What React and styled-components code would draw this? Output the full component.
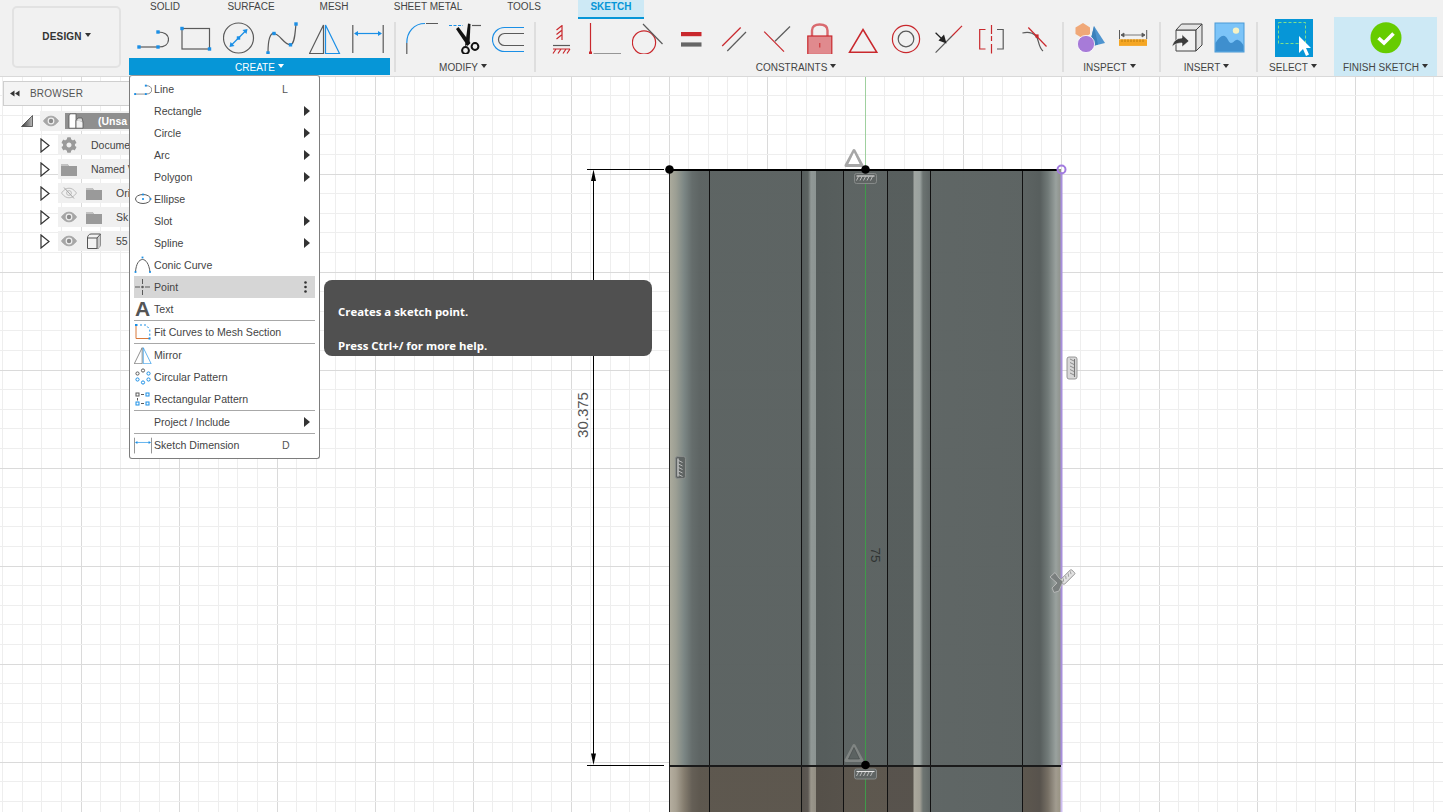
import React from "react";
import styled, { createGlobalStyle } from "styled-components";
import { FaCog } from "react-icons/fa";

const BLUE = "#1b8fe6";
const GRAY = "#5a5a5a";
const RED = "#c9282d";

const GlobalStyle = createGlobalStyle`
  html, body {
    margin: 0;
    padding: 0;
    background: #fff;
  }
  body {
    font-family: "Liberation Sans", Arial, sans-serif;
  }
`;

const Page = styled.div`
  width: 1443px;
  height: 812px;
  display: flex;
  flex-direction: column;
  overflow: hidden;
`;

const Toolbar = styled.header`
  height: 76px;
  flex: none;
  display: flex;
  background: #f1f1f1;
  border-bottom: 1px solid #d9d9d9;
`;

const DesignColumn = styled.div`
  width: 129px;
  flex: none;
  box-sizing: border-box;
  padding: 6px 8px 8px 12px;
`;

const DesignButton = styled.div`
  height: 100%;
  box-sizing: border-box;
  display: flex;
  align-items: center;
  justify-content: center;
  padding-bottom: 2px;
  border: 2px solid #e2e2e2;
  border-radius: 5px;
  font-size: 10px;
  font-weight: bold;
  color: #333;
  letter-spacing: 0.2px;
`;

const Caret = styled.span`
  display: inline-block;
  width: 0;
  height: 0;
  margin-left: 3px;
  margin-bottom: 2px;
  border-left: 3px solid transparent;
  border-right: 3px solid transparent;
  border-top: 4px solid ${(p) => p.$color || "#333"};
`;

const RightColumn = styled.div`
  flex: 1;
  display: flex;
  flex-direction: column;
`;

const Tabs = styled.nav`
  height: 17px;
  display: flex;
  align-items: flex-start;
`;

const Tab = styled.div`
  width: ${(p) => p.$width}px;
  height: ${(p) => (p.$active ? 19 : 13)}px;
  flex: none;
  box-sizing: border-box;
  margin-left: ${(p) => p.$offset || 0}px;
  text-align: center;
  font-size: 10px;
  line-height: 13px;
  font-weight: ${(p) => (p.$active ? "bold" : "normal")};
  color: ${(p) => (p.$active ? "#0696d7" : "#444")};
  background: ${(p) => (p.$active ? "#cde9f5" : "transparent")};
  border-bottom: ${(p) => (p.$active ? "2px solid #0696d7" : "none")};
  position: relative;
  z-index: 1;
`;

const Panels = styled.div`
  height: 59px;
  display: flex;
`;

const Panel = styled.section`
  width: ${(p) => p.$width}px;
  flex: none;
  display: flex;
  flex-direction: column;
  box-sizing: border-box;
  padding-top: 5px;
  margin-right: ${(p) => p.$after || 0}px;
  background: ${(p) => (p.$finish ? "#cde9f5" : "transparent")};
  position: relative;
`;

const Separator = styled.div`
  width: 2px;
  height: 50px;
  flex: none;
  margin-top: 5px;
  background: #dedede;
`;

const ToolRow = styled.div`
  height: 36px;
  display: flex;
  gap: 11px;
  padding-left: ${(p) => p.$pad}px;
  justify-content: ${(p) => (p.$center ? "center" : "flex-start")};
  svg {
    flex: none;
    display: block;
  }
`;

const PanelLabel = styled.div`
  height: 17px;
  box-sizing: border-box;
  padding-top: 1px;
  padding-right: ${(p) => p.$trim || 0}px;
  display: flex;
  align-items: center;
  justify-content: center;
  font-size: 10px;
  color: ${(p) => (p.$active ? "#fff" : "#444")};
  background: ${(p) => (p.$active ? "#0696d7" : "transparent")};
`;

const Viewport = styled.main`
  flex: 1;
  position: relative;
  background: #fff;
`;

const Scene = styled.svg`
  position: absolute;
  inset: 0;
  width: 100%;
  height: 100%;
  display: block;
`;

const DimensionText = styled.span`
  position: absolute;
  left: ${(p) => p.$x}px;
  top: ${(p) => p.$y}px;
  font-size: ${(p) => p.$size}px;
  line-height: 1;
  color: ${(p) => p.$color};
  white-space: nowrap;
  transform: translate(-50%, -50%) rotate(${(p) => p.$turn}deg);
`;

const Browser = styled.aside`
  position: absolute;
  left: 3px;
  top: 4px;
  width: 127px;
`;

const BrowserHeader = styled.div`
  height: 25px;
  box-sizing: border-box;
  display: flex;
  align-items: center;
  gap: 10px;
  padding-left: 6px;
  background: #f4f4f4;
  border: 1px solid #cfcfcf;
  font-size: 10px;
  color: #555;
  letter-spacing: 0.2px;
`;

const Tree = styled.div`
  padding-top: 3px;
`;

const TreeRow = styled.div`
  height: 24px;
  display: flex;
  align-items: center;
  padding-left: ${(p) => (p.$root ? 18 : 37)}px;
`;

const Toggle = styled.div`
  width: ${(p) => (p.$root ? 19 : 18)}px;
  flex: none;
  display: flex;
  svg {
    display: block;
  }
`;

const RowBody = styled.div`
  flex: 1;
  height: 20px;
  display: flex;
  align-items: center;
  gap: ${(p) => (p.$root ? 6 : 9)}px;
  padding-left: 3px;
  background: #f0f0f0;
  font-size: 10.5px;
  color: #444;
  white-space: nowrap;
  svg {
    flex: none;
    display: block;
  }
`;

const RowName = styled.span`
  margin-left: 5px;
`;

const RootName = styled.div`
  flex: 1;
  height: 16px;
  display: flex;
  align-items: center;
  padding-left: 3px;
  background: #8f8f8f;
  color: #fff;
  font-weight: bold;
  font-size: 10.5px;
`;

const RootLabel = styled.span`
  margin-left: 14px;
`;

const Menu = styled.div`
  position: absolute;
  left: 129px;
  top: -2px;
  width: 191px;
  height: 384px;
  box-sizing: border-box;
  padding: 2px 4px;
  background: #fff;
  border: 1px solid #7d7d7d;
  border-top-color: #999;
  border-radius: 3px;
  z-index: 2;
`;

const MenuItem = styled.div`
  height: 22px;
  display: grid;
  grid-template-columns: 20px 128px 22px 11px;
  align-items: center;
  font-size: 10.6px;
  color: #444;
  white-space: nowrap;
  background: ${(p) => (p.$active ? "#d6d6d6" : "transparent")};
  svg {
    display: block;
  }
`;

const Shortcut = styled.span`
  color: #555;
`;

const SubArrow = styled.span`
  width: 0;
  height: 0;
  border-top: 5px solid transparent;
  border-bottom: 5px solid transparent;
  border-left: 6px solid #333;
`;

const MenuDivider = styled.div`
  height: 1px;
  background: #a8a8a8;
`;

const LetterIcon = styled.span`
  font-size: 21px;
  line-height: 20px;
  font-weight: bold;
  color: #555;
  padding-left: 1px;
`;

const Tooltip = styled.div`
  position: absolute;
  left: 324px;
  top: 203px;
  width: 328px;
  height: 76px;
  box-sizing: border-box;
  padding-top: 23px;
  padding-left: 14px;
  background: #505050;
  border-radius: 8px;
  color: #fff;
  font-family: "Open Sans", "Liberation Sans", sans-serif;
  font-size: 11.4px;
  font-weight: 700;
  line-height: 17px;
  z-index: 2;
`;

const TooltipLine = styled.div`
  margin-bottom: 17px;
`;

const Sq = ({ x, y, s = 3.4, c = BLUE }) => <rect x={x - s / 2} y={y - s / 2} width={s} height={s} fill={c} />;

const Icon = ({ size = 32, box = 32, children }) => (
  <svg width={size} height={size} viewBox={`0 0 ${box} ${box}`} fill="none">
    {children}
  </svg>
);

const LineIcon = ({ size }) => (
  <Icon size={size}>
    <path d="M2 25H21" stroke={GRAY} strokeWidth="1.2" />
    <path d="M21 10C28 10 31.5 13 31.5 17.5C31.5 22 28 25 21 25" stroke={GRAY} strokeWidth="1.2" />
    <Sq x={2} y={25} />
    <Sq x={21} y={25} />
    <Sq x={21} y={10} />
  </Icon>
);

const RectIcon = () => (
  <Icon>
    <rect x="2" y="6.5" width="27.5" height="20.5" stroke={GRAY} strokeWidth="1.2" />
    <Sq x={2} y={6.5} />
    <Sq x={29.5} y={27} />
  </Icon>
);

const CircleIcon = () => (
  <Icon>
    <circle cx="15.5" cy="16" r="15" stroke={GRAY} strokeWidth="1.2" />
    <path d="M8 23.5L23 8.5" stroke={BLUE} strokeWidth="1.2" />
    <path d="M6.5 25L7.5 20L11.5 24ZM24.5 7L23.5 12L19.5 8Z" fill={BLUE} />
    <Sq x={15.5} y={16} />
  </Icon>
);

const SplineIcon = () => (
  <Icon>
    <path d="M2 31C2 18 4 11 8 11.5C14 12 18 23 24.5 22.8C29 22 29 10 30 2" stroke={GRAY} strokeWidth="1.2" />
    <Sq x={2} y={31} />
    <Sq x={8} y={11.5} />
    <Sq x={24.5} y={22.8} />
    <Sq x={30} y={2} />
  </Icon>
);

const MirrorIcon = ({ size }) => (
  <Icon size={size}>
    <path d="M0.5 31.5H14.5V3Z" stroke={GRAY} strokeWidth="1.2" />
    <path d="M16.5 31.5H30.5L16.5 3Z" stroke={BLUE} strokeWidth="1.2" />
  </Icon>
);

const DimensionIcon = ({ size }) => (
  <Icon size={size}>
    <path d="M0.8 3V31M31.2 3V31" stroke={GRAY} strokeWidth="1.2" />
    <path d="M3 11.5H29" stroke={BLUE} strokeWidth="1.2" />
    <path d="M2 11.5L6 9V14ZM30 11.5L26 9V14Z" fill={BLUE} />
  </Icon>
);

const FilletIcon = () => (
  <Icon>
    <path d="M0.8 21C0.8 10 8 1.5 19 1.5" stroke={BLUE} strokeWidth="1.2" />
    <path d="M0.8 21V33M20 1.5H32" stroke={GRAY} strokeWidth="1.2" />
  </Icon>
);

const ScissorsIcon = () => (
  <Icon>
    <path d="M0 3.5H14" stroke={BLUE} strokeWidth="1.2" strokeDasharray="3 1.5" />
    <path d="M23 3.5H32" stroke={GRAY} strokeWidth="1.2" />
    <path d="M7 7L9.5 5L21.5 21L18.5 24Z" fill="#111" />
    <path d="M19 1.5L21.5 2L20.5 22L16 24Z" fill="#111" />
    <circle cx="16.5" cy="28.5" r="3.4" stroke="#111" strokeWidth="2" />
    <circle cx="26" cy="24.5" r="3.4" stroke="#111" strokeWidth="2" />
  </Icon>
);

const OffsetIcon = () => (
  <Icon>
    <path d="M32 5.5H12.5A12 12 0 0 0 12.5 29.5H32" stroke={BLUE} strokeWidth="1.2" />
    <path d="M32 11.5H12.5A6 6 0 0 0 12.5 23.5H32" stroke={GRAY} strokeWidth="1.2" />
  </Icon>
);

const CoincidentIcon = () => (
  <Icon>
    <path d="M16 3V18M15.5 4L10.5 8M15.5 8.5L10.5 12.5M15.5 13L10.5 17" stroke={RED} strokeWidth="1.2" />
    <path d="M7 23.5H24" stroke={GRAY} strokeWidth="1.2" />
    <path d="M7 27H24M10 27L7 31.5M15 27L12 31.5M20 27L17 31.5M24 27L21 31.5" stroke={RED} strokeWidth="1.2" />
  </Icon>
);

const CollinearIcon = () => (
  <Icon>
    <path d="M1.5 1V31" stroke={RED} strokeWidth="1.2" />
    <Sq x={1.5} y={31} s={3} c={RED} />
    <path d="M4.5 32H32" stroke={GRAY} strokeWidth="1.2" />
  </Icon>
);

const TangentIcon = () => (
  <Icon>
    <circle cx="12" cy="20.5" r="11.6" stroke={RED} strokeWidth="1.2" />
    <path d="M11 2L30.5 22" stroke={GRAY} strokeWidth="1.2" />
  </Icon>
);

const EqualIcon = () => (
  <Icon>
    <rect x="6" y="10" width="20.5" height="4.2" fill={RED} />
    <rect x="6" y="20.4" width="20.5" height="4.2" fill="#666" />
  </Icon>
);

const ParallelIcon = () => (
  <Icon>
    <path d="M22.7 5.5L4.2 24" stroke={RED} strokeWidth="1.2" />
    <path d="M28 10L9.3 29" stroke={GRAY} strokeWidth="1.2" />
  </Icon>
);

const PerpendicularIcon = () => (
  <Icon>
    <path d="M3.2 9.7L23 29.6" stroke={RED} strokeWidth="1.2" />
    <path d="M29 4.5L14 19.3" stroke={GRAY} strokeWidth="1.2" />
  </Icon>
);

const LockIcon = () => (
  <Icon>
    <path d="M8 14V8.5C8 4.5 11 2.5 15.6 2.5C20.2 2.5 23.5 4.5 23.5 8.5V14" stroke="#d96a6f" strokeWidth="2.4" />
    <rect x="3.8" y="14" width="24" height="18.5" fill="#e08a8e" stroke={RED} strokeWidth="1.2" />
    <path d="M15.8 21V25.5" stroke={RED} strokeWidth="1" />
  </Icon>
);

const TriangleIcon = () => (
  <Icon>
    <path d="M16 7.5L29.8 30.3H2.5Z" stroke={RED} strokeWidth="1.5" />
  </Icon>
);

const ConcentricIcon = () => (
  <Icon>
    <circle cx="16" cy="17" r="13.6" stroke={RED} strokeWidth="1.2" />
    <circle cx="16" cy="17" r="7.8" stroke={GRAY} strokeWidth="1.2" />
  </Icon>
);

const MidpointIcon = () => (
  <Icon>
    <path d="M29 3.8L19 14" stroke={RED} strokeWidth="1.2" />
    <path d="M19 14L2.6 30.7" stroke={GRAY} strokeWidth="1.2" />
    <path d="M2.6 10.7L9 17" stroke="#222" strokeWidth="1.2" />
    <path d="M13.5 21.5L5.5 18.5L11 12.5Z" fill="#222" />
  </Icon>
);

const SymmetryIcon = () => (
  <Icon>
    <path d="M9.5 7.5H3.7V27H9.5" stroke={RED} strokeWidth="1.2" />
    <path d="M21 7.5H27.2V27H21" stroke={GRAY} strokeWidth="1.2" />
    <path d="M15.5 3V12M15.5 14V19M15.5 22V31.5" stroke={RED} strokeWidth="1.2" />
  </Icon>
);

const CurvatureIcon = () => (
  <Icon>
    <path d="M3.4 11C9 9.5 14 11 17 14C20 17 19 25 24 29" stroke={GRAY} strokeWidth="1.2" />
    <path d="M9.3 5.5L27.5 24.5" stroke={RED} strokeWidth="1.2" />
    <Sq x={18} y={14} s={3.2} c={RED} />
  </Icon>
);

const InspectIcon = () => (
  <Icon>
    <path d="M20 4L31 21L15 25Z" fill="#4e94cf" />
    <path d="M20 4L24 22.5L15 25Z" fill="#3b81bb" />
    <path d="M9 1L16 5.5V12L9 16.5L1.5 12V5.5Z" fill="#f0a878" />
    <circle cx="12" cy="22" r="8.6" fill="#a77bd8" stroke="#fff" strokeWidth="0.8" />
  </Icon>
);

const RulerIcon = () => (
  <Icon>
    <path d="M2.5 8V17M29.7 8V17" stroke={GRAY} strokeWidth="1" />
    <path d="M4 13H28M4 13L7 11V15ZM28 13L25 11V15Z" stroke={GRAY} strokeWidth="0.8" fill={GRAY} />
    <rect x="2" y="17.3" width="28" height="6.6" fill="#f5a623" />
    <path d="M5 17.3V20M8 17.3V20M11 17.3V20M14 17.3V20M17 17.3V20M20 17.3V20M23 17.3V20M26 17.3V20" stroke="#a86a00" strokeWidth="0.7" />
  </Icon>
);

const InsertIcon = () => (
  <Icon>
    <path d="M5 8V29H25V8Z" fill="#f2f2f2" stroke="#444" strokeWidth="1" />
    <path d="M5 8L10.5 2H31V23L25 29V8ZM25 8L31 2" fill="#e4e4e4" stroke="#444" strokeWidth="1" />
    <path d="M1 25C2 19 6 16 11 16V12.5L18 19L11 25V21C7 21 3.5 22 1 25Z" fill="#3c3c3c" stroke="#fff" strokeWidth="0.6" />
  </Icon>
);

const ImageIcon = () => (
  <Icon>
    <rect x="1" y="1" width="29" height="29" fill="#7cc4f8" stroke="#4a9ad6" strokeWidth="1" />
    <circle cx="22" cy="8.6" r="3.2" fill="#f6f2c4" />
    <path d="M1.5 21C5 15 9 12 12 15C14 17 15 21 17 21C20 21 21 17 24 18C27 19 29 22 29.5 24V29.5H1.5Z" fill="#3f8fce" />
  </Icon>
);

const SelectSvg = styled.svg`
  margin-top: -3px;
`;

const SelectIcon = () => (
  <SelectSvg width="38" height="38" viewBox="0 0 38 38" fill="none">
    <rect width="38" height="38" fill="#0696d7" />
    <rect x="3.5" y="3.5" width="27" height="21" stroke="#7fe08a" strokeWidth="1" strokeDasharray="3 2" />
    <path d="M24 17V34L28 30L31 37L34 35.5L31 29H36Z" fill="#fff" />
  </SelectSvg>
);

const FinishIcon = () => (
  <svg width="32" height="32" viewBox="0 0 32 32" fill="none">
    <circle cx="16" cy="15.7" r="15.5" fill="#66cc00" />
    <path d="M8.5 16L14 21L23.5 11.5" stroke="#fff" strokeWidth="3.6" />
  </svg>
);

const EllipseMini = () => (
  <Icon size={18} box={18}>
    <ellipse cx="9" cy="9" rx="7.5" ry="4.5" stroke={GRAY} strokeWidth="1" />
    <Sq x={9} y={9} s={1.8} />
    <Sq x={9} y={4.5} s={1.8} />
    <Sq x={16.5} y={9} s={1.8} />
  </Icon>
);

const ConicMini = () => (
  <Icon size={18} box={18}>
    <path d="M1.5 16C2 8 5 3.5 8.5 3.5C12 3.5 15 8 16 16" stroke={GRAY} strokeWidth="1" />
    <Sq x={1.5} y={16} s={1.8} />
    <Sq x={8.5} y={1.5} s={1.8} />
    <Sq x={16} y={16} s={1.8} />
  </Icon>
);

const PointMini = () => (
  <Icon size={18} box={18}>
    <path d="M1 9H6M11 9H16M8.5 1V6M8.5 12V17" stroke={GRAY} strokeWidth="1" />
    <circle cx="8.5" cy="9" r="1.3" fill={GRAY} />
  </Icon>
);

const FitCurvesMini = () => (
  <Icon size={18} box={18}>
    <path d="M2 3V15.5H15.5" stroke="#d8783a" strokeWidth="1" />
    <path d="M2 2H12L15.8 6.5V15" stroke={BLUE} strokeWidth="1" strokeDasharray="2 2" />
    <Sq x={2} y={2} s={2} />
    <Sq x={15.5} y={15.5} s={2} />
  </Icon>
);

const CircularMini = () => (
  <Icon size={18} box={18}>
    {[
      [9, 2.5],
      [14.5, 5.5],
      [14.5, 11.5],
      [9, 14.5],
      [3.5, 11.5],
      [3.5, 5.5],
    ].map(([cx, cy], i) => (
      <circle key={i} cx={cx} cy={cy} r="1.6" stroke={i === 0 || i === 5 ? GRAY : BLUE} strokeWidth="1" />
    ))}
  </Icon>
);

const RectPatternMini = () => (
  <Icon size={18} box={18}>
    <rect x="2" y="3" width="3" height="3" stroke={GRAY} strokeWidth="1" />
    <rect x="12" y="3" width="3" height="3" stroke={BLUE} strokeWidth="1" />
    <rect x="2" y="12" width="3" height="3" stroke={BLUE} strokeWidth="1" />
    <rect x="12" y="12" width="3" height="3" stroke={BLUE} strokeWidth="1" />
    <path d="M7 4.5H10M3.5 8V10.5M7 13.5H10" stroke={GRAY} strokeWidth="1" />
  </Icon>
);

const DotsMini = () => (
  <svg width="3" height="12" viewBox="0 0 3 12">
    <circle cx="1.5" cy="1.5" r="1.3" fill="#333" />
    <circle cx="1.5" cy="6" r="1.3" fill="#333" />
    <circle cx="1.5" cy="10.5" r="1.3" fill="#333" />
  </svg>
);

const EyeIcon = ({ off }) => (
  <Icon size={16} box={16}>
    <path
      d="M0.5 8C3 4.5 5.5 3.2 8 3.2C10.5 3.2 13 4.5 15.5 8C13 11.5 10.5 12.8 8 12.8C5.5 12.8 3 11.5 0.5 8Z"
      fill={off ? "none" : "#a6a6a6"}
      stroke={off ? "#bcbcbc" : "#a6a6a6"}
    />
    {!off && <circle cx="8" cy="8" r="3.4" fill="#f0f0f0" />}
    {!off && <circle cx="8" cy="8" r="2.2" fill="#8c8c8c" />}
    {off && <circle cx="8" cy="8" r="2.4" stroke="#bcbcbc" />}
    {off && <path d="M3 2.5L13 13.5" stroke="#a6a6a6" />}
  </Icon>
);

const FolderIcon = () => (
  <Icon size={16} box={16}>
    <path d="M0 3H6.5L8 5H16V15H0Z" fill="#9a9a9a" />
    <path d="M0 3H6.5L8 5H0Z" fill="#c2c2c2" />
  </Icon>
);

const BoxIcon = () => (
  <Icon size={16} box={16}>
    <path d="M1.5 5C1.5 3 3 1 5 1H14.5V11C14.5 13 13 15.5 11 15.5H1.5Z" fill="#f2f2f2" stroke="#555" />
    <path d="M11 5L14.5 1V11C14.5 13 13 15.5 11 15.5Z" fill="#c9c9c9" />
    <path d="M1.5 5H11V15.5M11 5L14.5 1" stroke="#555" />
  </Icon>
);

const RootIcon = () => (
  <Icon size={16} box={16}>
    <path d="M1 3C1 1.5 2 0.8 3.5 0.8H8V15.2H1Z" fill="#fff" stroke="#555" strokeWidth="0.8" />
    <path d="M8 7.5H12L15 9V15.2H8Z" fill="#f2f2f2" stroke="#555" strokeWidth="0.8" />
    <path d="M8 7.5L10 5H14L15 9" fill="#dcdcdc" stroke="#555" strokeWidth="0.8" />
  </Icon>
);

const ClosedToggle = () => (
  <svg width="10" height="15" viewBox="0 0 10 15">
    <path d="M1 1L9 7.5L1 14Z" fill="#fff" stroke="#333" strokeWidth="1.2" />
  </svg>
);

const OpenToggle = () => (
  <svg width="12" height="12" viewBox="0 0 12 12">
    <defs>
      <linearGradient id="toggleFill" x1="0" y1="0" x2="1" y2="0">
        <stop offset="0" stopColor="#333" />
        <stop offset="1" stopColor="#bbb" />
      </linearGradient>
    </defs>
    <path d="M0.5 11.5H11.5V0.5Z" fill="url(#toggleFill)" stroke="#444" strokeWidth="0.8" />
  </svg>
);

const BackArrows = () => (
  <svg width="10" height="7" viewBox="0 0 10 7">
    <path d="M0 3.5L4.5 0.5V6.5ZM5 3.5L9.5 0.5V6.5Z" fill="#333" />
  </svg>
);

const X0 = 669;
const X1 = 1061;

const topStops = [
  [669, "#acab9c"],
  [676, "#9a9d92"],
  [684, "#7a8583"],
  [692, "#636b6a"],
  [700, "#5b6261"],
  [801, "#5b6261"],
  [802, "#545b5a"],
  [808, "#5a615f"],
  [811, "#8f9795"],
  [816, "#8a9290"],
  [816.5, "#535a59"],
  [843, "#555c5b"],
  [843.5, "#5b6261"],
  [887, "#5b6261"],
  [887.5, "#555c5b"],
  [913, "#555c5b"],
  [914, "#a0a5a1"],
  [920, "#98a09d"],
  [923, "#69716f"],
  [930, "#5d6463"],
  [1022, "#5b6261"],
  [1040, "#555c5b"],
  [1048, "#6f7876"],
  [1056, "#98a09d"],
  [1061, "#8c8f88"],
];

const bottomStops = [
  [669, "#b5ae9f"],
  [676, "#a69f90"],
  [684, "#837b6d"],
  [692, "#635d54"],
  [700, "#5b554c"],
  [801, "#5b554c"],
  [802, "#55504a"],
  [808, "#5a5550"],
  [811, "#99958a"],
  [816, "#8f8b80"],
  [816.5, "#524d46"],
  [843, "#544f48"],
  [843.5, "#5b554c"],
  [887, "#5b554c"],
  [887.5, "#55504a"],
  [913, "#55504a"],
  [914, "#aaa79c"],
  [920, "#a09e94"],
  [923, "#6c7370"],
  [930, "#5d6463"],
  [1022, "#5b6261"],
  [1022.5, "#5b554c"],
  [1040, "#55504a"],
  [1048, "#746d62"],
  [1056, "#a09a8e"],
  [1061, "#96917f"],
];

const Stops = ({ list }) =>
  list.map(([x, c]) => <stop key={x} offset={(x - X0) / (X1 - X0)} stopColor={c} />);

const minorX = Array.from({ length: 75 }, (_, i) => 2.6 + i * 19.6);
const minorY = Array.from({ length: 39 }, (_, i) => 95.6 + i * 19.6);

const isMajor = (v, offset) => Math.abs((v - offset) / 98 - Math.round((v - offset) / 98)) < 0.01;

const GridLines = () => (
  <g shapeRendering="crispEdges">
    {minorX.map((x) => (
      <line key={x} x1={x} x2={x} y1={77} y2={812} stroke={isMajor(x, 669) ? "#dadada" : "#eeeeee"} />
    ))}
    {minorY.map((y) => (
      <line key={y} x1={0} x2={1443} y1={y} y2={y} stroke={isMajor(y, 468) ? "#dadada" : "#eeeeee"} />
    ))}
  </g>
);

const HatchGlyph = ({ x, y, turn = 0, light }) => (
  <g transform={`translate(${x} ${y}) rotate(${turn})`}>
    <rect
      x="-11"
      y="-5"
      width="22"
      height="10"
      rx="2"
      fill={light ? "#d8d8d8" : "#5f6463"}
      stroke={light ? "#8f8f8f" : "#8b8e8d"}
      strokeWidth="0.9"
    />
    <path d="M-9 -2.5H9" stroke={light ? "#777" : "#e4e4e4"} strokeWidth="1.1" />
    <path d="M-7 -2L-9 2M-3.5 -2L-5.5 2M0 -2L-2 2M3.5 -2L1.5 2M7 -2L5 2" stroke={light ? "#777" : "#cfcfcf"} strokeWidth="0.8" />
  </g>
);

const SlantGlyph = () => (
  <g>
    <g transform="translate(1067.5 577) rotate(-45)">
      <rect x="-8" y="-3" width="16" height="6" rx="1" fill="#e2e2e2" stroke="#8f8f8f" strokeWidth="0.9" />
      <path d="M-6 0.5L-4 -2M-2.5 0.5L-0.5 -2M1 0.5L3 -2M4.5 0.5L6 -2" stroke="#888" strokeWidth="0.7" />
    </g>
    <path d="M1050 577L1055 572.5L1059 578L1063 581.5L1059 591L1054 592.5L1052 588L1057 583Z" fill="#7a7f7e" stroke="#b4b6b5" strokeWidth="1" />
  </g>
);

const TriangleGlyph = ({ x, y, dark }) => (
  <g transform={`translate(${x} ${y})`}>
    <path d="M0 -8.5L8 6.5H-8Z" fill="none" stroke={dark ? "#808583" : "#a6a6a6"} strokeWidth="3" strokeLinejoin="round" />
    <path d="M0 -6.5L5.5 5H-5.5Z" fill={dark ? "#5c6362" : "#fff"} stroke={dark ? "#454a49" : "none"} strokeWidth="0.6" />
  </g>
);

const SceneDrawing = () => (
  <Scene viewBox="0 77 1443 735">
    <defs>
      <linearGradient id="bodyTop" gradientUnits="userSpaceOnUse" x1={X0} x2={X1} y1="0" y2="0">
        <Stops list={topStops} />
      </linearGradient>
      <linearGradient id="bodyBottom" gradientUnits="userSpaceOnUse" x1={X0} x2={X1} y1="0" y2="0">
        <Stops list={bottomStops} />
      </linearGradient>
    </defs>
    <GridLines />
    <rect x={X0} y="169" width={X1 - X0} height="596" fill="url(#bodyTop)" fillOpacity="0.985" />
    <rect x={X0} y="765" width={X1 - X0} height="47" fill="url(#bodyBottom)" fillOpacity="0.985" />
    <g shapeRendering="crispEdges" stroke="#111" strokeWidth="1">
      <path d="M709.5 169V812M801.5 169V812M843.5 169V812M887.5 169V812M930.5 169V812M1022.5 169V812" />
      <path d="M669.5 169V812" strokeWidth="1" stroke="#222" />
    </g>
    <path d="M865.5 77V169" stroke="#9fd09f" strokeWidth="1" shapeRendering="crispEdges" />
    <path d="M865.5 169V812" stroke="#3f9a4a" strokeWidth="1" shapeRendering="crispEdges" />
    <path d="M1061.5 172V765" stroke="#a88fdc" strokeWidth="2" />
    <path d="M1061.5 765V812" stroke="#cdbcf0" strokeWidth="2" />
    <g stroke="#000" shapeRendering="crispEdges">
      <path d="M669 169.5H1058" strokeWidth="2" />
      <path d="M669 765.5H1061" strokeWidth="2" stroke="#1a1a1a" />
      <path d="M587 169.5H664M587 765.5H664" strokeWidth="1.2" />
      <path d="M593.5 175V760" strokeWidth="1" />
    </g>
    <path d="M593.5 169.5L596 181H591ZM593.5 765L596 753.5H591Z" fill="#000" />
    <TriangleGlyph x={854} y={159} />
    <TriangleGlyph x={854} y={754} dark />
    <HatchGlyph x={865.5} y={178.5} />
    <HatchGlyph x={865.5} y={774} />
    <HatchGlyph x={680.5} y={467.5} turn={-90} />
    <HatchGlyph x={1072} y={368} turn={90} light />
    <SlantGlyph />
    <circle cx="669.5" cy="169.5" r="4.3" fill="#000" />
    <circle cx="865.5" cy="169.5" r="4.3" fill="#000" />
    <circle cx="865.5" cy="765" r="4.3" fill="#000" />
    <circle cx="1061.5" cy="169.5" r="4" fill="none" stroke="#a27be0" strokeWidth="2" />
  </Scene>
);

const tabs = [
  { label: "SOLID", width: 72 },
  { label: "SURFACE", width: 100 },
  { label: "MESH", width: 66 },
  { label: "SHEET METAL", width: 122 },
  { label: "TOOLS", width: 70 },
  { label: "SKETCH", width: 66, offset: 19, active: true },
];

const menuRows = [
  { label: "Line", icon: <LineIcon size={18} />, key: "L" },
  { label: "Rectangle", arrow: true },
  { label: "Circle", arrow: true },
  { label: "Arc", arrow: true },
  { label: "Polygon", arrow: true },
  { label: "Ellipse", icon: <EllipseMini /> },
  { label: "Slot", arrow: true },
  { label: "Spline", arrow: true },
  { label: "Conic Curve", icon: <ConicMini /> },
  { label: "Point", icon: <PointMini />, active: true, more: true },
  { label: "Text", icon: <LetterIcon>A</LetterIcon> },
  { divider: true },
  { label: "Fit Curves to Mesh Section", icon: <FitCurvesMini /> },
  { divider: true },
  { label: "Mirror", icon: <MirrorIcon size={18} /> },
  { label: "Circular Pattern", icon: <CircularMini /> },
  { label: "Rectangular Pattern", icon: <RectPatternMini /> },
  { divider: true },
  { label: "Project / Include", arrow: true },
  { divider: true },
  { label: "Sketch Dimension", icon: <DimensionIcon size={18} />, key: "D" },
];

// names stop where the open menu hides them in the screenshot
const treeRows = [
  { icons: [<FaCog key="g" size={16} color="#9a9a9a" />], name: "Docume" },
  { icons: [<FolderIcon key="f" />], name: "Named V" },
  { icons: [<EyeIcon key="e" off />, <FolderIcon key="f" />], name: "Ori" },
  { icons: [<EyeIcon key="e" />, <FolderIcon key="f" />], name: "Sk" },
  { icons: [<EyeIcon key="e" />, <BoxIcon key="b" />], name: "55" },
];

const App = () => {
  return (
    <Page>
      <GlobalStyle />
      <Toolbar>
        <DesignColumn>
          <DesignButton>
            DESIGN
            <Caret />
          </DesignButton>
        </DesignColumn>
        <RightColumn>
          <Tabs>
            {tabs.map((t) => (
              <Tab key={t.label} $width={t.width} $offset={t.offset} $active={t.active}>
                {t.label}
              </Tab>
            ))}
          </Tabs>
          <Panels>
            <Panel $width={261} $after={4}>
              <ToolRow $pad={8}>
                <LineIcon />
                <RectIcon />
                <CircleIcon />
                <SplineIcon />
                <MirrorIcon />
                <DimensionIcon />
              </ToolRow>
              <PanelLabel $active>
                CREATE
                <Caret $color="#fff" />
              </PanelLabel>
            </Panel>
            <Separator />
            <Panel $width={138}>
              <ToolRow $pad={10}>
                <FilletIcon />
                <ScissorsIcon />
                <OffsetIcon />
              </ToolRow>
              <PanelLabel $trim={4}>
                MODIFY
                <Caret />
              </PanelLabel>
            </Panel>
            <Separator />
            <Panel $width={526}>
              <ToolRow $pad={10}>
                <CoincidentIcon />
                <CollinearIcon />
                <TangentIcon />
                <EqualIcon />
                <ParallelIcon />
                <PerpendicularIcon />
                <LockIcon />
                <TriangleIcon />
                <ConcentricIcon />
                <MidpointIcon />
                <SymmetryIcon />
                <CurvatureIcon />
              </ToolRow>
              <PanelLabel $trim={6}>
                CONSTRAINTS
                <Caret />
              </PanelLabel>
            </Panel>
            <Separator />
            <Panel $width={95}>
              <ToolRow $pad={10}>
                <InspectIcon />
                <RulerIcon />
              </ToolRow>
              <PanelLabel $trim={4}>
                INSPECT
                <Caret />
              </PanelLabel>
            </Panel>
            <Separator />
            <Panel $width={95}>
              <ToolRow $pad={10}>
                <InsertIcon />
                <ImageIcon />
              </ToolRow>
              <PanelLabel $trim={4}>
                INSERT
                <Caret />
              </PanelLabel>
            </Panel>
            <Separator />
            <Panel $width={76}>
              <ToolRow $pad={17}>
                <SelectIcon />
              </ToolRow>
              <PanelLabel $trim={6}>
                SELECT
                <Caret />
              </PanelLabel>
            </Panel>
            <Panel $width={103} $finish>
              <ToolRow $pad={0} $center>
                <FinishIcon />
              </ToolRow>
              <PanelLabel>
                FINISH SKETCH
                <Caret />
              </PanelLabel>
            </Panel>
          </Panels>
        </RightColumn>
      </Toolbar>

      <Viewport>
        <SceneDrawing />
        <DimensionText $x={582} $y={338} $size={15} $color="#555" $turn={-90}>
          30.375
        </DimensionText>
        <DimensionText $x={875} $y={478} $size={13.5} $color="#2f3332" $turn={90}>
          75
        </DimensionText>

        <Browser>
          <BrowserHeader>
            <BackArrows />
            BROWSER
          </BrowserHeader>
          <Tree>
            <TreeRow $root>
              <Toggle $root>
                <OpenToggle />
              </Toggle>
              <RowBody $root>
                <EyeIcon />
                <RootName>
                  <RootIcon />
                  <RootLabel>(Unsa</RootLabel>
                </RootName>
              </RowBody>
            </TreeRow>
            {treeRows.map((r) => (
              <TreeRow key={r.name}>
                <Toggle>
                  <ClosedToggle />
                </Toggle>
                <RowBody>
                  {r.icons}
                  <RowName>{r.name}</RowName>
                </RowBody>
              </TreeRow>
            ))}
          </Tree>
        </Browser>

        <Menu>
          {menuRows.map((row, i) =>
            row.divider ? (
              <MenuDivider key={i} />
            ) : (
              <MenuItem key={row.label} $active={row.active}>
                <span>{row.icon}</span>
                <span>{row.label}</span>
                <Shortcut>{row.key}</Shortcut>
                {row.arrow && <SubArrow />}
                {row.more && <DotsMini />}
              </MenuItem>
            )
          )}
        </Menu>

        <Tooltip>
          <TooltipLine>Creates a sketch point.</TooltipLine>
          <TooltipLine>Press Ctrl+/ for more help.</TooltipLine>
        </Tooltip>
      </Viewport>
    </Page>
  );
};

export default App;
